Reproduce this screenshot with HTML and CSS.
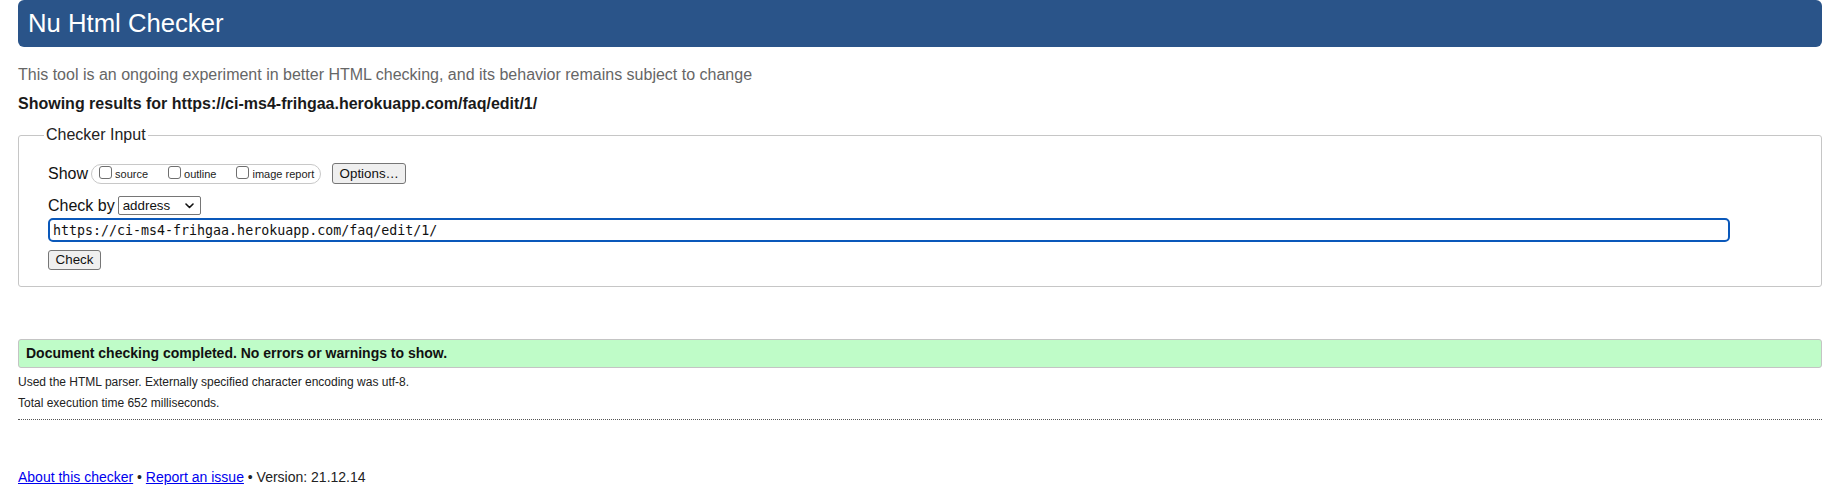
FILE: index.html
```html
<!DOCTYPE html>
<html lang="en">
<head>
<meta charset="utf-8">
<title>Nu Html Checker</title>
<link rel="stylesheet" href="styles.css">
</head>
<body>
<h1 class="title">Nu Html Checker</h1>
<p class="intro">This tool is an ongoing experiment in better HTML checking, and its behavior remains subject to change</p>
<p class="showing">Showing results for https://ci-ms4-frihgaa.herokuapp.com/faq/edit/1/</p>
<form class="form">
<fieldset class="checker">
<legend class="legend">Checker Input</legend>
<div class="row row-show">
<span class="label">Show</span>
<span class="group">
<label class="opt"><input type="checkbox" class="cb"><span>source</span></label>
<label class="opt"><input type="checkbox" class="cb"><span>outline</span></label>
<label class="opt opt-last"><input type="checkbox" class="cb"><span>image report</span></label>
</span>
<button type="button" class="btn btn-options">Options…</button>
</div>
<div class="row row-by">
<span class="label">Check by</span>
<span class="select">address<svg class="chev" width="9" height="6" viewBox="0 0 9 6"><path d="M1 1 L4.5 4.5 L8 1" fill="none" stroke="#111" stroke-width="1.6" stroke-linecap="round" stroke-linejoin="round"/></svg></span>
</div>
<div class="row row-url">
<input class="url" type="text" value="https://ci-ms4-frihgaa.herokuapp.com/faq/edit/1/">
</div>
<div class="row row-check">
<button type="button" class="btn btn-check">Check</button>
</div>
</fieldset>
</form>
<div class="success">Document checking completed. No errors or warnings to show.</div>
<p class="details">Used the HTML parser. Externally specified character encoding was utf-8.</p>
<p class="details details-2">Total execution time 652 milliseconds.</p>
<hr class="sep">
<p class="footer"><a href="#">About this checker</a> • <a href="#">Report an issue</a> • Version: 21.12.14</p>
</body>
</html>
```
FILE: styles.css
```css
html, body {
  background: #fff;
}
body {
  margin: 0;
  padding: 0 18px;
  font-family: "Liberation Sans", Arial, sans-serif;
  color: #111;
}
.title {
  margin: 0;
  height: 47px;
  line-height: 47px;
  padding: 0 10px;
  background: #2a5489;
  color: #fff;
  font-size: 25.7px;
  font-weight: normal;
  border-radius: 6px;
}
.intro {
  margin: 19px 0 0;
  font-size: 16px;
  line-height: 18px;
  color: #666;
}
.showing {
  margin: 11px 0 0;
  font-size: 16px;
  line-height: 18px;
  font-weight: bold;
  color: #1a1a1a;
}
.form {
  margin: 13px 0 0;
}
.checker {
  margin: 0;
  padding: 19px 16px 16px 29px;
  border: 1px solid #c6c6c6;
  border-radius: 3px;
}
.legend {
  margin-left: -4px;
  padding: 0 2px;
  font-size: 16px;
  line-height: 18px;
  color: #222;
}
.row {
  display: flex;
  align-items: center;
}
.label {
  font-size: 16px;
  line-height: 18px;
  color: #111;
}
.row-show {
  height: 21px;
}
.group {
  display: flex;
  align-items: center;
  height: 20px;
  box-sizing: border-box;
  margin-left: 3px;
  padding: 0 6px 0 7px;
  border: 1px solid #c8c8c8;
  border-radius: 10px;
}
.opt {
  display: flex;
  align-items: center;
  font-size: 11px;
  color: #222;
  margin-right: 20px;
}
.opt-last {
  margin-right: 0;
}
.cb {
  appearance: none;
  -webkit-appearance: none;
  width: 13px;
  height: 13px;
  margin: 0 3px 2px 0;
  box-sizing: border-box;
  border: 1px solid #6f6f6f;
  border-radius: 3px;
  background: #fff;
}
.btn {
  font-family: "Liberation Sans", Arial, sans-serif;
  font-size: 13.33px;
  color: #111;
  background: #efefef;
  border: 1px solid #767676;
  border-radius: 3px;
  padding: 0 6px;
  height: 21px;
  line-height: 19px;
}
.btn-options {
  margin-left: 11px;
  width: 74px;
}
.row-by {
  margin-top: 12px;
  height: 19px;
}
.select {
  display: flex;
  align-items: center;
  justify-content: space-between;
  margin-left: 3px;
  width: 83px;
  height: 19px;
  box-sizing: border-box;
  padding: 0 6px 0 4px;
  border: 1px solid #767676;
  border-radius: 2px;
  font-size: 13.33px;
  color: #111;
  background: #fff;
}
.chev {
  display: block;
}
.row-url {
  margin-top: 3px;
}
.url {
  width: 1682px;
  height: 24px;
  box-sizing: border-box;
  margin: 0;
  padding: 0 3px;
  border: 2px solid #0a58ba;
  border-radius: 5px;
  font-family: "DejaVu Sans Mono", "Liberation Mono", monospace;
  font-size: 13.3px;
  color: #111;
  outline: none;
}
.row-check {
  margin-top: 8px;
}
.btn-check {
  width: 53px;
  height: 20px;
  line-height: 18px;
}
.success {
  margin-top: 52px;
  height: 29px;
  box-sizing: border-box;
  padding: 0 7px;
  line-height: 27px;
  background: #bffcc8;
  border: 1px solid #c4c4c4;
  border-radius: 3px;
  font-size: 14px;
  font-weight: bold;
  color: #111;
}
.details {
  margin: 7px 0 0;
  font-size: 12px;
  line-height: 14px;
  color: #222;
}
.sep {
  margin: 9px 0 0;
  border: 0;
  border-top: 1px dotted #555;
  height: 0;
}
.footer {
  margin: 49px 0 0;
  font-size: 14px;
  line-height: 16px;
  color: #222;
}
.footer a {
  color: #0000ee;
  text-decoration: underline;
}
```
